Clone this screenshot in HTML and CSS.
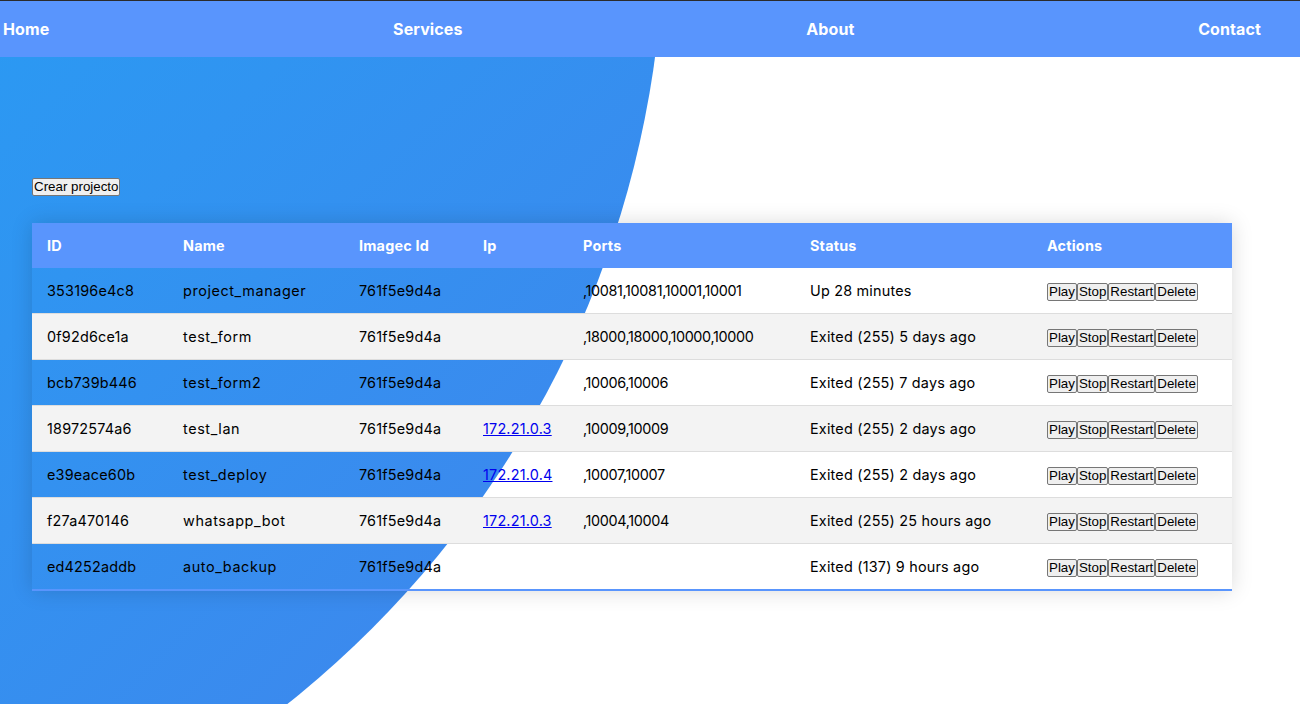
FILE: index.html
```html
<!DOCTYPE html>
<html lang="es">
<head>
<meta charset="utf-8">
<title>Projectos</title>
<link rel="stylesheet" href="styles.css">
</head>
<body>
<div class="page">
  <div class="bg-circle"></div>
  <nav class="topnav">
    <ul class="nav-list">
      <li><a class="nav-link" href="#">Home</a></li>
      <li><a class="nav-link" href="#">Services</a></li>
      <li><a class="nav-link" href="#">About</a></li>
      <li><a class="nav-link" href="#">Contact</a></li>
    </ul>
  </nav>
  <main class="content">
    <div class="toolbar"><button class="btn">Crear projecto</button></div>
    <table class="styled-table">
      <colgroup>
        <col class="c-id"><col class="c-name"><col class="c-img"><col class="c-ip"><col class="c-ports"><col class="c-status"><col class="c-actions">
      </colgroup>
      <thead>
        <tr><th>ID</th><th>Name</th><th>Imagec Id</th><th>Ip</th><th>Ports</th><th>Status</th><th>Actions</th></tr>
      </thead>
      <tbody>
        <tr><td>353196e4c8</td><td class="name">project_manager</td><td>761f5e9d4a</td><td></td><td class="ports">,10081,10081,10001,10001</td><td>Up 28 minutes</td><td class="actions"><button class="btn">Play</button><button class="btn">Stop</button><button class="btn">Restart</button><button class="btn">Delete</button></td></tr>
        <tr><td>0f92d6ce1a</td><td class="name">test_form</td><td>761f5e9d4a</td><td></td><td class="ports">,18000,18000,10000,10000</td><td>Exited (255) 5 days ago</td><td class="actions"><button class="btn">Play</button><button class="btn">Stop</button><button class="btn">Restart</button><button class="btn">Delete</button></td></tr>
        <tr><td>bcb739b446</td><td class="name">test_form2</td><td>761f5e9d4a</td><td></td><td class="ports">,10006,10006</td><td>Exited (255) 7 days ago</td><td class="actions"><button class="btn">Play</button><button class="btn">Stop</button><button class="btn">Restart</button><button class="btn">Delete</button></td></tr>
        <tr><td>18972574a6</td><td class="name">test_lan</td><td>761f5e9d4a</td><td><a href="#">172.21.0.3</a></td><td class="ports">,10009,10009</td><td>Exited (255) 2 days ago</td><td class="actions"><button class="btn">Play</button><button class="btn">Stop</button><button class="btn">Restart</button><button class="btn">Delete</button></td></tr>
        <tr><td>e39eace60b</td><td class="name">test_deploy</td><td>761f5e9d4a</td><td><a href="#">172.21.0.4</a></td><td class="ports">,10007,10007</td><td>Exited (255) 2 days ago</td><td class="actions"><button class="btn">Play</button><button class="btn">Stop</button><button class="btn">Restart</button><button class="btn">Delete</button></td></tr>
        <tr><td>f27a470146</td><td class="name">whatsapp_bot</td><td>761f5e9d4a</td><td><a href="#">172.21.0.3</a></td><td class="ports">,10004,10004</td><td>Exited (255) 25 hours ago</td><td class="actions"><button class="btn">Play</button><button class="btn">Stop</button><button class="btn">Restart</button><button class="btn">Delete</button></td></tr>
        <tr><td>ed4252addb</td><td class="name">auto_backup</td><td>761f5e9d4a</td><td></td><td class="ports"></td><td>Exited (137) 9 hours ago</td><td class="actions"><button class="btn">Play</button><button class="btn">Stop</button><button class="btn">Restart</button><button class="btn">Delete</button></td></tr>
      </tbody>
    </table>
  </main>
</div>
</body>
</html>
```

FILE: styles.css
```css
html, body {
  margin: 0;
  padding: 0;
  overflow: hidden;
}

body {
  font-family: "Inter", "Open Sans", sans-serif;
  color: #000;
  border-top: 1px solid #2b2b2b;
}

.page {
  position: relative;
  min-height: 703px;
  overflow: hidden;
}

.bg-circle {
  position: absolute;
  left: -1328px;
  top: -1073px;
  width: 1992px;
  height: 1992px;
  border-radius: 50%;
  background-image: linear-gradient(-45deg, #4481eb 0%, #04befe 100%);
  z-index: 0;
}

.topnav {
  position: relative;
  z-index: 1;
  background: #5995fd;
  height: 56px;
}

.nav-list {
  list-style: none;
  margin: 0;
  padding: 0 39px 0 3px;
  height: 100%;
  display: flex;
  align-items: center;
  justify-content: space-between;
}

.nav-link {
  color: #fff;
  text-decoration: none;
  font-weight: 700;
  font-size: 16px;
  letter-spacing: 0.1px;
}

.content {
  position: relative;
  z-index: 1;
  padding: 121px 0 0 32px;
}

.toolbar {
  display: flex;
}

.btn {
  font-family: "Liberation Sans", Arial, sans-serif;
  font-size: 13.333px;
  line-height: 16px;
  letter-spacing: 0;
  color: #000;
  background: #efefef;
  border: 1px solid #767676;
  border-radius: 2px;
  padding: 0 1px;
  margin: 0;
}

.styled-table {
  margin-top: 27px;
  width: 1200px;
  table-layout: fixed;
  border-collapse: collapse;
  font-size: 14.4px;
  line-height: 21px;
  letter-spacing: 0.2px;
  box-shadow: 0 0 20px rgba(0, 0, 0, 0.15);
}

.c-id { width: 136px; }
.c-name { width: 176px; }
.c-img { width: 124px; }
.c-ip { width: 100px; }
.c-ports { width: 227px; }
.c-status { width: 237px; }
.c-actions { width: 200px; }

.styled-table thead tr {
  background-color: #5995fd;
  color: #fff;
  text-align: left;
}

.styled-table th {
  font-weight: 700;
}

.styled-table th,
.styled-table td {
  padding: 12px 15px;
  white-space: nowrap;
}

.styled-table td.name {
  letter-spacing: 0.6px;
}

.styled-table td.ports {
  letter-spacing: -0.35px;
}

.styled-table tbody tr {
  border-bottom: 1px solid #dddddd;
}

.styled-table tbody tr:nth-of-type(even) {
  background-color: #f3f3f3;
}

.styled-table tbody tr:last-of-type {
  border-bottom: 2px solid #5995fd;
}

.styled-table td.actions {
  padding-top: 0;
  padding-bottom: 0;
  vertical-align: middle;
}

.styled-table a {
  color: #0000ee;
}
```
